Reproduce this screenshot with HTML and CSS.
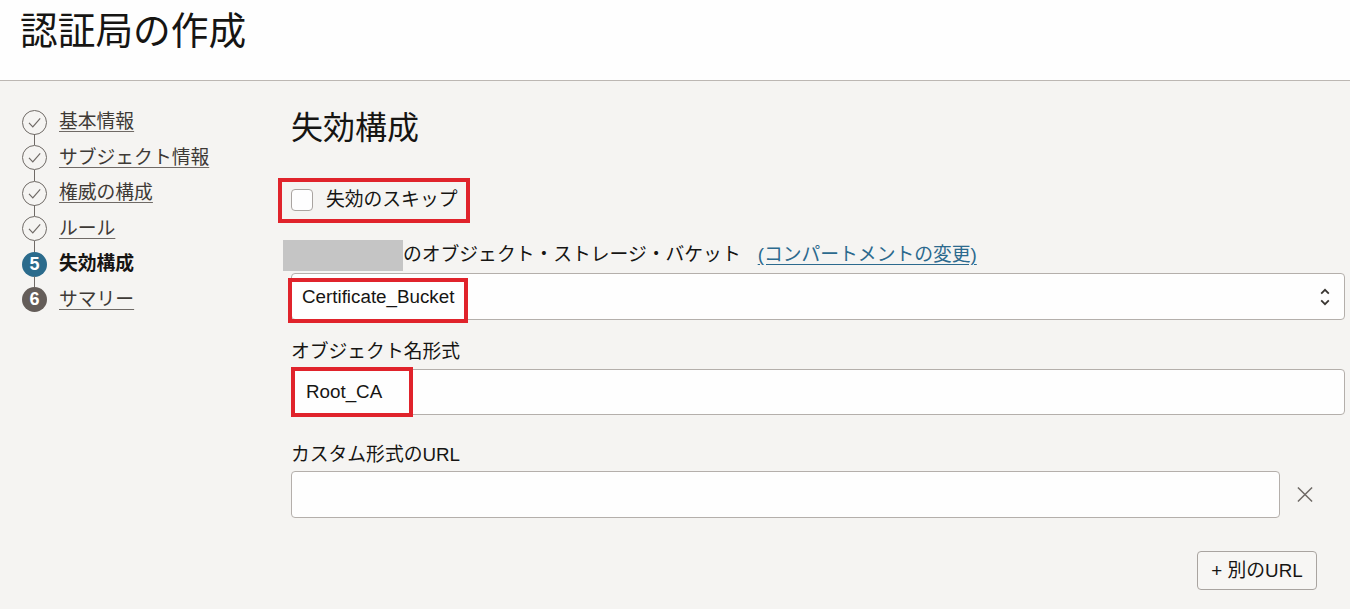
FILE: index.html
```html
<!DOCTYPE html>
<html lang="ja">
<head>
<meta charset="utf-8">
<title>認証局の作成</title>
<link rel="stylesheet" href="styles.css">
</head>
<body>
<header class="page-header">
  <h1 class="page-title">認証局の作成</h1>
</header>
<div class="layout">
  <nav class="steps">
    <ul class="step-list">
      <li class="step done">
        <svg class="step-icon" viewBox="0 0 25 25"><circle cx="12.5" cy="12.5" r="12" fill="none" stroke="#6f6a66" stroke-width="1"/><path d="M7 12.8 L10.8 16.8 L18.2 8.4" fill="none" stroke="#6f6a66" stroke-width="1.2"/></svg>
        <a class="step-label" href="#">基本情報</a>
      </li>
      <li class="step done">
        <svg class="step-icon" viewBox="0 0 25 25"><circle cx="12.5" cy="12.5" r="12" fill="none" stroke="#6f6a66" stroke-width="1"/><path d="M7 12.8 L10.8 16.8 L18.2 8.4" fill="none" stroke="#6f6a66" stroke-width="1.2"/></svg>
        <a class="step-label" href="#">サブジェクト情報</a>
      </li>
      <li class="step done">
        <svg class="step-icon" viewBox="0 0 25 25"><circle cx="12.5" cy="12.5" r="12" fill="none" stroke="#6f6a66" stroke-width="1"/><path d="M7 12.8 L10.8 16.8 L18.2 8.4" fill="none" stroke="#6f6a66" stroke-width="1.2"/></svg>
        <a class="step-label" href="#">権威の構成</a>
      </li>
      <li class="step done">
        <svg class="step-icon" viewBox="0 0 25 25"><circle cx="12.5" cy="12.5" r="12" fill="none" stroke="#6f6a66" stroke-width="1"/><path d="M7 12.8 L10.8 16.8 L18.2 8.4" fill="none" stroke="#6f6a66" stroke-width="1.2"/></svg>
        <a class="step-label" href="#">ルール</a>
      </li>
      <li class="step current">
        <span class="step-num num-current">5</span>
        <span class="step-label step-label-current">失効構成</span>
      </li>
      <li class="step last">
        <span class="step-num num-next">6</span>
        <a class="step-label" href="#">サマリー</a>
      </li>
    </ul>
  </nav>
  <main class="content">
    <h2 class="section-title">失効構成</h2>

    <label class="skip-row">
      <span class="checkbox"></span>
      <span class="skip-text">失効のスキップ</span>
    </label>

    <div class="field-label label-bucket">
      <span class="redacted"></span><span>のオブジェクト・ストレージ・バケット</span>
      <a class="change-link" href="#">(コンパートメントの変更)</a>
    </div>
    <div class="select-box">
      <span class="select-value">Certificate_Bucket</span>
      <svg class="select-arrows" viewBox="0 0 10 18"><path d="M1.2 5.6 L5 1.8 L8.8 5.6" fill="none" stroke="#3a3632" stroke-width="1.8"/><path d="M1.2 12.4 L5 16.2 L8.8 12.4" fill="none" stroke="#3a3632" stroke-width="1.8"/></svg>
      <span class="mark mark-bucket"></span>
    </div>

    <div class="field-label label-name">オブジェクト名形式</div>
    <div class="text-box">
      <span class="text-value">Root_CA</span>
      <span class="mark mark-name"></span>
    </div>

    <div class="field-label label-url">カスタム形式のURL</div>
    <div class="url-row">
      <div class="text-box url-box"></div>
      <span class="remove-btn">
        <svg viewBox="0 0 18 18" width="18" height="18"><path d="M1.5 1.5 L16.5 16.5 M16.5 1.5 L1.5 16.5" stroke="#6f6a66" stroke-width="1.6" fill="none"/></svg>
      </span>
    </div>

    <div class="actions">
      <button class="add-btn" type="button">+ 別のURL</button>
    </div>
  </main>
</div>
</body>
</html>
```

FILE: styles.css
```css
* { box-sizing: border-box; }
html, body { margin: 0; padding: 0; }
body {
  font-family: "Liberation Sans", "Noto Sans CJK JP", sans-serif;
  font-size: 18.8px;
  color: #161513;
  background: #f5f4f2;
  height: 609px;
  overflow: hidden;
}
.page-header {
  background: #fefefe;
  height: 81px;
  border-bottom: 1px solid #bcb7b3;
  padding: 11px 0 0 20px;
}
.page-title {
  margin: 0;
  font-weight: normal;
  font-size: 37.7px;
  line-height: 40px;
  color: #161513;
}
.layout {
  display: flex;
}
.steps {
  width: 291px;
  flex: none;
  padding: 23.3px 0 0 22px;
}
.step-list {
  list-style: none;
  margin: 0;
  padding: 0;
}
.step {
  position: relative;
  display: flex;
  align-items: center;
  gap: 12px;
  height: 35.5px;
}
.step::after {
  content: "";
  position: absolute;
  left: 12px;
  top: 30.2px;
  width: 1px;
  height: 10.6px;
  background: #6f6a66;
}
.step.last::after { display: none; }
.step-icon {
  width: 25px;
  height: 25px;
  flex: none;
  display: block;
}
.step-num {
  width: 25px;
  height: 25px;
  flex: none;
  border-radius: 50%;
  color: #fff;
  font-size: 18px;
  line-height: 25px;
  text-align: center;
  font-weight: bold;
}
.num-current { background: #2b6b8c; }
.num-next { background: #645d59; }
.step-label {
  color: #3e3a36;
  text-decoration: underline;
  text-decoration-color: #6f6a66;
  text-underline-offset: 3px;
  line-height: 26px;
}
.step-label-current {
  color: #161513;
  font-weight: bold;
  text-decoration: none;
}
.content {
  flex: 1;
  padding: 26.5px 5px 0 0;
}
.section-title {
  margin: 0;
  font-weight: normal;
  font-size: 32px;
  line-height: 40px;
}
.skip-row {
  display: flex;
  align-items: center;
  width: 192px;
  height: 45px;
  margin: 30.5px 0 0 -13px;
  border: 4px solid #e0232b;
  padding: 0 0 2px 9px;
}
.checkbox {
  width: 22px;
  height: 22px;
  border: 1px solid #a9a4a0;
  border-radius: 4px;
  background: #fefefe;
  flex: none;
}
.skip-text {
  margin-left: 13px;
  line-height: 26px;
}
.field-label {
  line-height: 26px;
  height: 26px;
  white-space: nowrap;
}
.label-bucket {
  display: flex;
  align-items: center;
  margin-top: 19px;
  margin-bottom: 5px;
}
.label-name { margin-top: 19px; margin-bottom: 4px; }
.label-url { margin-top: 27px; margin-bottom: 3px; }
.redacted {
  display: block;
  flex: none;
  width: 120px;
  height: 31px;
  margin-left: -8px;
  background: #c5c5c5;
}
.change-link {
  color: #2c6a8e;
  margin-left: 17px;
  text-underline-offset: 3px;
}
.select-box {
  position: relative;
  display: flex;
  align-items: center;
  justify-content: space-between;
  height: 47px;
  background: #fefefe;
  border: 1px solid #b4afab;
  border-radius: 4px;
  padding: 0 14px 0 10px;
}
.select-value {
  line-height: 26px;
}
.select-arrows {
  width: 10px;
  height: 18px;
  display: block;
}
.mark {
  position: absolute;
  border: 4px solid #e0232b;
  pointer-events: none;
}
.mark-bucket {
  left: -4px;
  top: 4px;
  width: 180px;
  height: 45px;
}
.text-box {
  position: relative;
  display: flex;
  align-items: center;
  height: 46px;
  background: #fefefe;
  border: 1px solid #b4afab;
  border-radius: 4px;
  padding: 0 14px;
}
.text-value { line-height: 26px; }
.mark-name {
  left: -1px;
  top: -3px;
  width: 122px;
  height: 50px;
}
.url-row {
  display: flex;
  align-items: center;
}
.url-box {
  flex: 1;
  height: 47px;
}
.remove-btn {
  width: 34px;
  margin: 0 23px 0 8px;
  display: flex;
  justify-content: center;
  align-items: center;
}
.remove-btn svg { display: block; width: 18px; height: 17px; }
.actions {
  display: flex;
  justify-content: flex-end;
  margin-top: 33px;
  padding-right: 28px;
}
.add-btn {
  font-family: "Liberation Sans", "Noto Sans CJK JP", sans-serif;
  font-size: 18.8px;
  color: #161513;
  background: #f7f6f4;
  border: 1px solid #a9a4a0;
  border-radius: 4px;
  width: 120px;
  height: 39px;
  padding: 0;
  line-height: 26px;
}
```
